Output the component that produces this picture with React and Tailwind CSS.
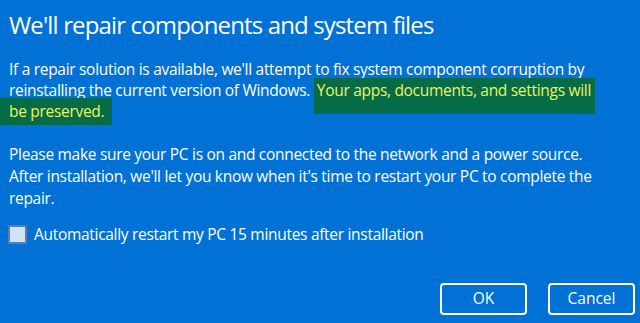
import { useState } from "react"

const RepairDialog = () => {
  const [autoRestart, setAutoRestart] = useState(false)

  return (
    <div className="w-[640px] h-[323px] bg-[#0271d5] text-white font-['Segoe_UI','Open_Sans',sans-serif] flex flex-col overflow-hidden">
      <h1 className="pl-[9px] pt-[10px] text-[24px] leading-[30px] font-normal tracking-[-0.85px]">
        We'll repair components and system files
      </h1>

      <div className="pl-[9px] mt-[19px] text-[15.5px] leading-[21px] tracking-[-0.3px]">
        <p>
          If a repair solution is available, we'll attempt to fix system component corruption by
          <br />
          reinstalling the current version of Windows.{" "}
          <span className="bg-[#066b47] text-[#eef45c] pl-[3px] pr-[4px] pt-[1px] pb-[13px]">
            Your apps, documents, and settings will
          </span>
          <br />
          <span className="bg-[#066b47] text-[#eef45c] -ml-[9px] pl-[9px] pr-[8px] pt-[2px] pb-[3px]">
            be preserved.
          </span>
        </p>

        <p className="mt-[21px] leading-[22px]">
          Please make sure your PC is on and connected to the network and a power source.
          <br />
          After installation, we'll let you know when it's time to restart your PC to complete the
          <br />
          repair.
        </p>
      </div>

      <label className="flex items-center gap-[7px] pl-[8px] mt-[14px] text-[15.5px] tracking-[-0.3px] cursor-pointer">
        <span
          onClick={() => setAutoRestart(!autoRestart)}
          className="w-[19px] h-[19px] bg-[#d0e2f6] border-2 border-[#5a7fae] flex items-center justify-center"
        >
          {autoRestart && <span className="text-[#0271d5] text-[12px]">✓</span>}
        </span>
        Automatically restart my PC 15 minutes after installation
      </label>

      <div className="flex justify-end gap-[21px] mt-auto mb-[8px] pr-[5px]">
        <button className="w-[87px] h-[32px] border-2 border-white rounded-[4px] text-[15.5px] text-white">
          OK
        </button>
        <button className="w-[87px] h-[32px] border-2 border-white rounded-[4px] text-[15.5px] text-white">
          Cancel
        </button>
      </div>
    </div>
  )
}

export default function App() {
  return <RepairDialog />
}
